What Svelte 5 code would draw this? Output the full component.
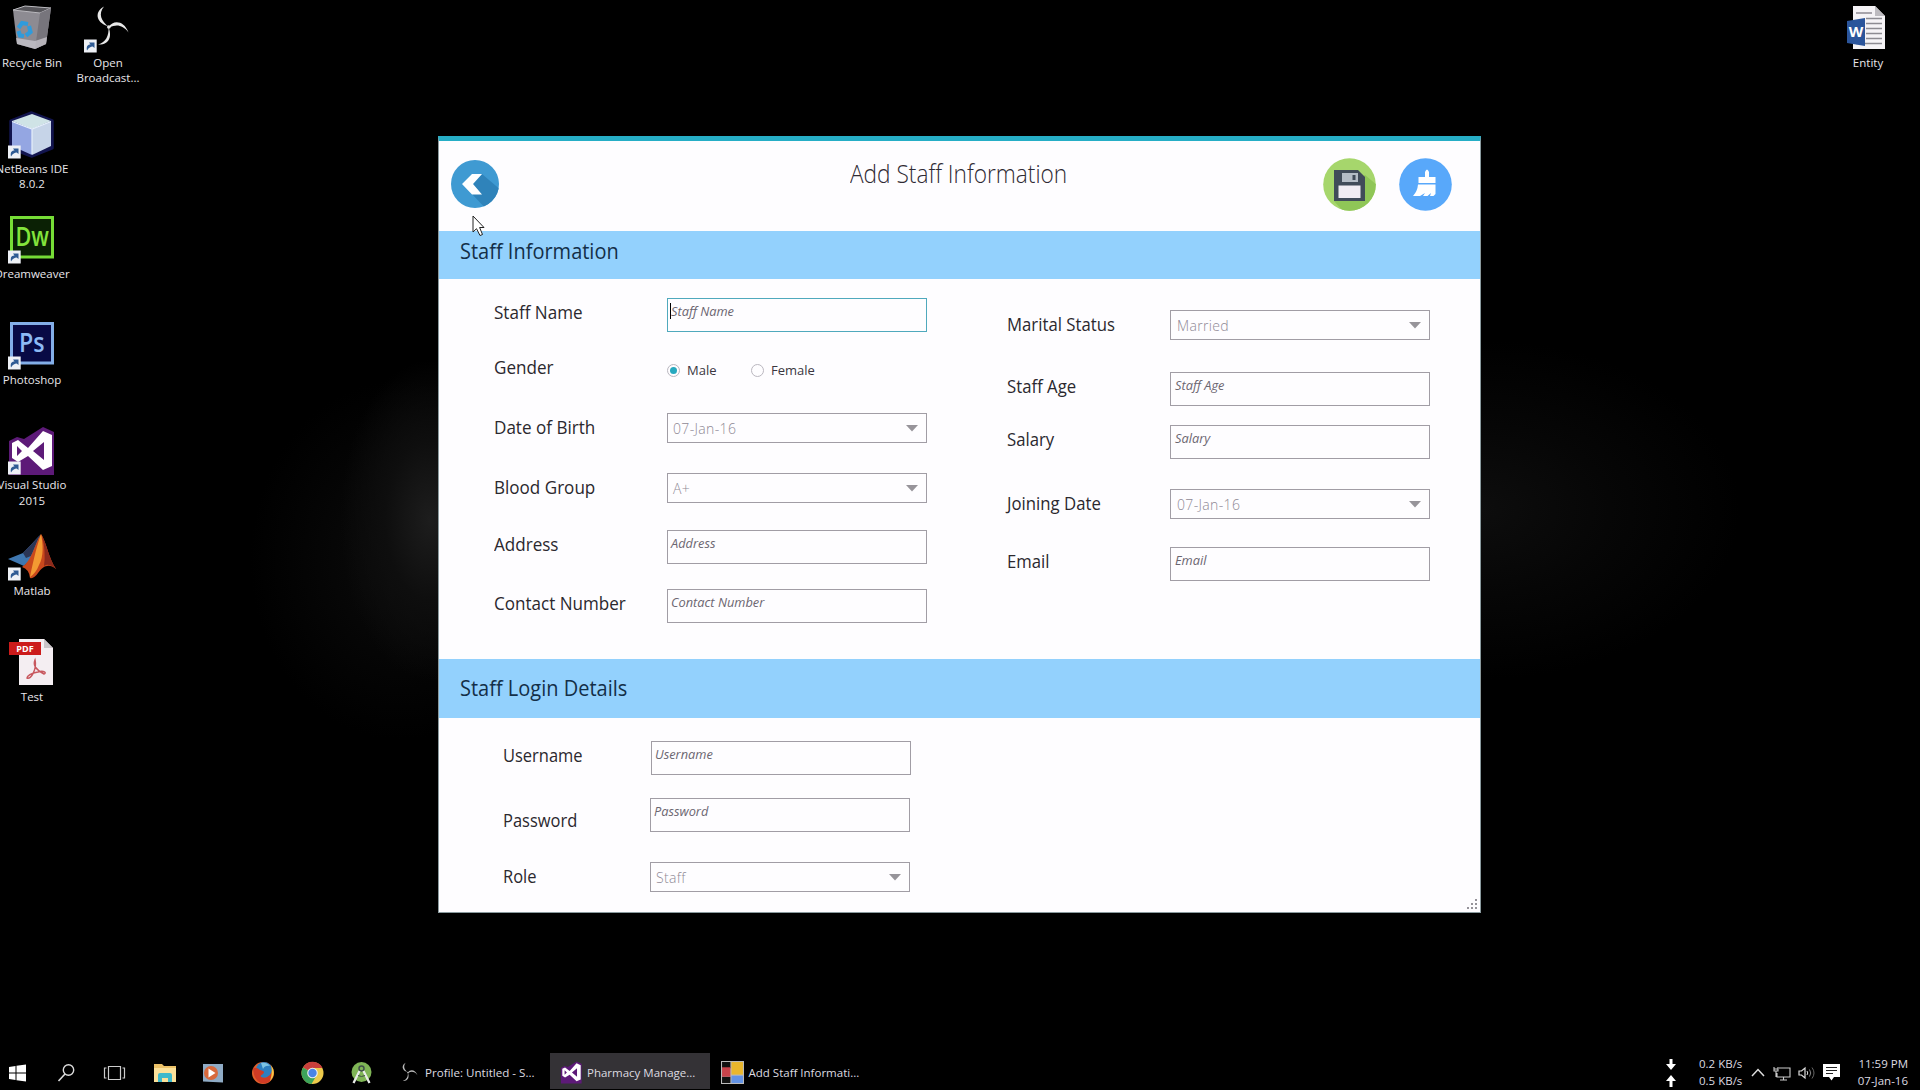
<script>
  const shortcuts = [
    { icon: 'bin', lines: ['Recycle Bin'] },
    { icon: 'netbeans', lines: ['NetBeans IDE', '8.0.2'], link: true },
    { icon: 'dw', lines: ['Dreamweaver'], link: true },
    { icon: 'ps', lines: ['Photoshop'], link: true },
    { icon: 'vs', lines: ['Visual Studio', '2015'], link: true },
    { icon: 'matlab', lines: ['Matlab'], link: true },
    { icon: 'pdf', lines: ['Test'] },
  ];
  const second = [{ icon: 'obs', lines: ['Open', 'Broadcast...'], link: true }];
  const right = [{ icon: 'word', lines: ['Entity'] }];

  const personal = [
    { label: 'Staff Name', kind: 'text', focus: true },
    { label: 'Gender', kind: 'radio' },
    { label: 'Date of Birth', kind: 'select', value: '07-Jan-16' },
    { label: 'Blood Group', kind: 'select', value: 'A+' },
    { label: 'Address', kind: 'text' },
    { label: 'Contact Number', kind: 'text' },
  ];
  const work = [
    { label: 'Marital Status', kind: 'select', value: 'Married' },
    { label: 'Staff Age', kind: 'text' },
    { label: 'Salary', kind: 'text' },
    { label: 'Joining Date', kind: 'select', value: '07-Jan-16' },
    { label: 'Email', kind: 'text' },
  ];
  const login = [
    { label: 'Username', kind: 'text', indent: true },
    { label: 'Password', kind: 'text', low: true },
    { label: 'Role', kind: 'select', value: 'Staff' },
  ];
</script>

{#snippet vsLogo()}
  <path d="M1 14 L9 10 L16 12 L35 0 L46 5 V48 H1Z" fill="#5d1a78" />
  <path fill-rule="evenodd" fill="#fff" d="M4 16 L10 13 L20 21 L35 4 L44 8 V39 L35 43 L20 29 L10 35 L4 31Z M9 19 V29 L14 24Z M36 15 L25 24 L36 33Z" />
{/snippet}

{#snippet obsLogo()}
  <path d="M20 1.500 C11 6 11 17 23.500 21 L25 22 C17 16 14 9 20 1.500Z" />
  <path d="M25 21.500 C29 15 40 15 44.500 27.500 C39 20 32 19 26 22.500Z" />
  <path d="M24.500 22 C28 31 26 40 14 39.500 C22 37 25 31 24.500 22Z" />
  <circle cx="24.800" cy="22" r="1.800" />
{/snippet}

{#snippet shortcut(item)}
  <div class="shortcut">
    <svg class="glyph" viewBox="0 0 48 50">
      {#if item.icon === 'bin'}
        <path d="M5 5 L17 1 L43 3 L38 39 L27 44 L9 39Z" fill="#8d8b92" />
        <path d="M5 5 L17 1 L43 3 L32 8Z" fill="#56555a" stroke="#b9b8bd" />
        <path d="M32 8 L43 3 L38 39 L27 44Z" fill="#77757c" />
        <path d="M8 33 L27 36 L39 32 L38 39 L27 44 L9 39Z" fill="#c9c7cd" opacity=".75" />
        <g fill="none" stroke="#2f9bdc" stroke-width="4.200"><path d="M10.500 23 L14 18 L20 19" /><path d="M21 21 L22.500 27 L18 30.500" /><path d="M16 31 L12 30.500 L10.500 26" /></g>
      {:else if item.icon === 'netbeans'}
        <path d="M3 10 L23 2 L44 10 V37 L24 45 L3 37Z" fill="#12144e" stroke="#12144e" stroke-width="3.500" stroke-linejoin="round" />
        <path d="M4 10 L24 3 L43 10 L24 18Z" fill="#cfe3e6" />
        <path d="M4 10 L24 18 V44 L4 35Z" fill="#94a6e2" />
        <path d="M43 10 L24 18 V44 L43 35Z" fill="#c6d4e8" />
        <path d="M4 10.500 L24 18 L43 10.500 M24 18 V43" fill="none" stroke="#e6effb" stroke-width="1.200" />
      {:else if item.icon === 'dw'}
        <rect x="3.500" y="1.500" width="41" height="39.500" fill="#0b2105" stroke="#76dd36" stroke-width="3" />
        <text x="7.500" y="30" class="adobe" fill="#83e43c" textLength="33.500" lengthAdjust="spacingAndGlyphs">Dw</text>
      {:else if item.icon === 'ps'}
        <rect x="3.500" y="1.500" width="41" height="39.500" fill="#080a45" stroke="#83aee8" stroke-width="3" />
        <text x="11" y="30" class="adobe" fill="#8dbaf5" textLength="25.500" lengthAdjust="spacingAndGlyphs">Ps</text>
      {:else if item.icon === 'vs'}
        {@render vsLogo()}
      {:else if item.icon === 'matlab'}
        <path d="M0 26 L15 20 Q23 12 32 2 L25 24 L16 33Z" fill="#3f77b0" />
        <path d="M15 20 Q23 12 32 2 L23 23 L18 25Z" fill="#2b3656" />
        <path d="M33 1 C38 8 41 26 48 36 C41 30 35 33 30 40 Q26 46 22 45 Q21 36 14 34 C24 28 26 12 33 1Z" fill="#c9481c" />
        <path d="M33 1 C35 10 36 24 31 32 Q28 40 22 44 C24 34 28 15 33 1Z" fill="#f39a32" />
        <path d="M34 3 C39 12 41 26 48 36 C42 31 39 31 36 33 Q38 18 34 3Z" fill="#8c2a1c" />
      {:else if item.icon === 'pdf'}
        <path d="M11 0 H36 L45 9 V46 H11Z" fill="#f4eef2" />
        <path d="M36 0 L45 9 H36Z" fill="#c9c4c8" />
        <rect x="1" y="3" width="32" height="13" fill="#cc1b1b" />
        <text x="17" y="13" class="pdf">PDF</text>
        <path d="M27 21 C25 26 28 31 36 35 C39 34 36 31 30 33 C23 34 19 37 19 39 C23 41 29 30 27 21Z" fill="none" stroke="#c8585f" stroke-width="1.500" />
      {:else if item.icon === 'obs'}
        <g fill="#e8e8e8">{@render obsLogo()}</g>
      {:else if item.icon === 'word'}
        <path d="M9 1 H31 L41 11 V44 H9Z" fill="#f5f3f6" />
        <path d="M31 1 L41 11 H31Z" fill="#bdbbc0" />
        <path d="M12 8 H28 M22 13.500 H38 M22 18.500 H38 M22 23.500 H38 M22 28.500 H38 M22 33.500 H38 M12 38.500 H38" stroke="#8d8b92" stroke-width="1.500" />
        <path d="M3 16 L21 13 V41 L3 38Z" fill="#2b559b" />
        <text x="12" y="32" class="word">W</text>
      {/if}
      {#if item.link}
        <path d="M0 34.500 H12.700 V47.500 H0Z" fill="#eef1f6" />
        <path d="M3 45.500 C2 41 4 39.500 6.500 39.500 L5 37.500 H10.500 V43 L8.700 41.500 C6.500 41.500 5 42.500 3 45.500Z" fill="#2f5b94" />
      {/if}
    </svg>
    {#each item.lines as line}<span>{line}</span>{/each}
  </div>
{/snippet}

{#snippet field(f)}
  <div class="label" class:low={f.low}>{f.label}</div>
  {#if f.kind === 'text'}
    <div class="input" class:focus={f.focus} class:indent={f.indent}><em>{f.label}</em></div>
  {:else if f.kind === 'select'}
    <div class="select">
      <span>{f.value}</span>
      <svg width="12" height="7" viewBox="0 0 12 7"><path d="M0 0 H12 L6 6.500Z" fill="#97949a" /></svg>
    </div>
  {:else}
    <div class="radios">
      <i class="dot on"></i><span class="male">Male</span><i class="dot"></i><span>Female</span>
    </div>
  {/if}
{/snippet}

<div class="desktop">
  <div class="icons">
    <div class="col">{#each shortcuts as s}{@render shortcut(s)}{/each}</div>
    <div class="col">{#each second as s}{@render shortcut(s)}{/each}</div>
    <div class="col last">{#each right as s}{@render shortcut(s)}{/each}</div>
  </div>

  <div class="window">
    <header>
      <svg class="back" viewBox="0 0 48 48">
        <defs><clipPath id="disc"><circle cx="24" cy="24" r="24" /></clipPath></defs>
        <circle cx="24" cy="24" r="24" fill="#3f9ad2" />
        <path clip-path="url(#disc)" d="M31 14 L52 32 V52 H38 L20 33 L30 34 L22 24Z" fill="#2f83ba" />
        <path d="M21 14 H31 L22 24 L31 34.500 H21 L11 24Z" fill="#fff" />
      </svg>
      <h1>Add Staff Information</h1>
      <svg class="act" viewBox="0 0 53 53">
        <defs><clipPath id="disc2"><circle cx="26.500" cy="26.500" r="26.300" /></clipPath></defs>
        <circle cx="26.500" cy="26.500" r="26.300" fill="#a6d66c" />
        <path clip-path="url(#disc2)" d="M42 17 L60 32 V60 H26 L11 43Z" fill="#8fc657" />
        <path d="M11 12 H35 L42 19 V43 H11Z" fill="#404b59" />
        <rect x="19" y="15" width="16" height="9" fill="#b4bcc6" /><rect x="29.500" y="17" width="3" height="5" fill="#404b59" />
        <rect x="15.500" y="27.500" width="22" height="12.500" fill="#f0ecf3" />
      </svg>
      <svg class="act" viewBox="0 0 53 53">
        <circle cx="26.500" cy="26.500" r="26.300" fill="#58a8fa" />
        <path d="M26 14 Q28 9 30 14 V19 H36.500 V25 H19.500 V19 H26Z" fill="#fff" />
        <path d="M19 26.500 H36.500 V36 L34.500 38 L31 38 L32 35 L28.500 38 H24 L26 35 L21 38 H14 Q18.500 33 19 26.500Z" fill="#fff" />
      </svg>
    </header>
    <h2><span>Staff Information</span></h2>
    <section class="info">
      <div class="form personal">{#each personal as f}{@render field(f)}{/each}</div>
      <div class="form work">{#each work as f}{@render field(f)}{/each}</div>
    </section>
    <h2 class="tall"><span>Staff Login Details</span></h2>
    <section class="login">
      <div class="form creds">{#each login as f}{@render field(f)}{/each}</div>
      <svg class="grip" width="12" height="12" viewBox="0 0 12 12"><path d="M9 1h2v2h-2z M9 5h2v2h-2z M9 9h2v2h-2z M5 5h2v2h-2z M5 9h2v2h-2z M1 9h2v2h-2z" fill="#96939a" /></svg>
    </section>
  </div>

  <svg class="cursor" width="14" height="22" viewBox="0 0 14 22"><path d="M1 1 V17 L4.500 13.700 L8 20.500 L10.500 19.500 L7.600 12.500 H12Z" fill="#fff" stroke="#222" stroke-width="1" /></svg>

  <footer>
    <div class="pins">
      <svg viewBox="0 0 24 24"><path d="M4 6 L10.500 5 V11.500 H4Z M11.500 4.800 L21 3.500 V11.500 H11.500Z M4 12.500 H10.500 V19 L4 18Z M11.500 12.500 H21 V20.500 L11.500 19.200Z" fill="#fff" /></svg>
      <svg viewBox="0 0 24 24"><circle cx="14.500" cy="9" r="5.200" fill="none" stroke="#ddd" stroke-width="1.400" /><path d="M11 13 L4.500 20" stroke="#ddd" stroke-width="1.600" /></svg>
      <svg viewBox="0 0 24 24"><path d="M5.500 5.500 H17.500 V18.500 H5.500Z M3.500 7 H1.500 V17 H3.500 M19.500 7 H21.500 V17 H19.500" fill="none" stroke="#ccc" stroke-width="1.200" /></svg>
      <svg viewBox="0 0 24 24"><path d="M1 3 H9 L11 5 H23 V21 H1Z" fill="#ecc268" /><path d="M1 7 H23 V21 H1Z" fill="#fbe19a" /><path d="M5 21 V14 Q5 12 7 12 H17 Q19 12 19 14 V21 H15 V17 H9 V21Z" fill="#3db9cc" /></svg>
      <svg viewBox="0 0 24 24"><path d="M1 3 H21 V21.500 L1 20.500Z" fill="#8fabc5" /><circle cx="9" cy="12" r="7" fill="#d8693c" /><path d="M6.500 7.500 L13.500 12 L6.500 16.500Z" fill="#fff" /></svg>
      <svg viewBox="0 0 24 24"><circle cx="12" cy="12" r="11" fill="#e2602b" /><circle cx="13" cy="9" r="8" fill="#2d7fc0" /><path d="M10 2 Q16 1 19 5 Q14 4 12 8Z" fill="#7cc4e4" /><path d="M2 7 Q6 6 9 9 Q15 10 12 13 Q9 14 10 16 Q16 19 21 11 Q23 20 14 22.500 Q3 23 2 7Z" fill="#cf3b25" /><path d="M20 4 Q26 12 19 20 Q22 11 20 4Z" fill="#f6c843" /></svg>
      <svg viewBox="0 0 24 24"><circle cx="12.500" cy="12" r="11" fill="#edc94a" /><path d="M12.500 12 L3 6.500 A11 11 0 0 1 22.500 7 H12.500Z" fill="#c93f3c" /><path d="M3 6.500 A11 11 0 0 0 11.500 23 L16.500 14.500 L12.500 12Z" fill="#3da45a" /><circle cx="12.500" cy="12" r="5.300" fill="#eee" /><circle cx="12.500" cy="12" r="4.200" fill="#4a83e4" /></svg>
      <svg viewBox="0 0 24 24"><circle cx="12.500" cy="11" r="10" fill="#7fb556" /><circle cx="12.500" cy="7.500" r="2.500" fill="none" stroke="#41504a" stroke-width="1.500" /><path d="M10.500 10 L4.500 22 M14.500 10 L20.500 22" stroke="#e8ece8" stroke-width="2.300" /><path d="M9 14.500 Q12.500 16.500 16 14.500" fill="none" stroke="#41504a" stroke-width="1" /></svg>
    </div>
    <div class="task obs"><svg viewBox="8 -2 44 48" fill="#bbb">{@render obsLogo()}</svg><span>Profile: Untitled - S...</span></div>
    <div class="task active"><svg viewBox="0 -1 48 50">{@render vsLogo()}</svg><span>Pharmacy Manage...</span></div>
    <div class="task"><svg viewBox="0 0 22 22"><rect width="22" height="22" fill="#bbb" /><path d="M1 1h8v6h-8z M1 15h8v6h-8z" fill="#111" /><rect x="1" y="6" width="8" height="9" fill="#c9434b" /><rect x="10" y="1" width="11" height="12" fill="#e9b62c" /><rect x="10" y="14" width="11" height="7" fill="#6292e4" /></svg><span>Add Staff Informati...</span></div>
    <div class="tray">
      <svg class="arrows" width="12" height="30" viewBox="0 0 12 30"><path d="M4.500 1 H7.500 V6 H11 L6 12 L1 6 H4.500Z M4.500 29 H7.500 V23 H11 L6 17 L1 23 H4.500Z" fill="#fff" /></svg>
      <div class="two speed"><span>0.2 KB/s</span><span>0.5 KB/s</span></div>
      <svg class="chev" width="14" height="9" viewBox="0 0 14 9"><path d="M1 8 L7 1.500 L13 8" fill="none" stroke="#ddd" stroke-width="1.500" /></svg>
      <svg class="net" width="18" height="16" viewBox="0 0 18 16"><path d="M6 3 H17 V12 H4 V8 M10.500 12 V15 M7 15 H14 M1 2 V6 H5 V2 M1 4 H5 M3 6 V12" fill="none" stroke="#ccc" stroke-width="1.100" /></svg>
      <svg class="vol" width="18" height="14" viewBox="0 0 18 14"><path d="M1 5 H3.500 L7 2 V12 L3.500 9 H1Z" fill="none" stroke="#ddd" stroke-width="1.200" /><path d="M9 5 Q10.500 7 9 9" fill="none" stroke="#ddd" /><path d="M11.500 3.500 Q14 7 11.500 10.500" fill="none" stroke="#888" /><path d="M14 1.500 Q18 7 14 12.500" fill="none" stroke="#666" /></svg>
      <svg class="note" width="17" height="17" viewBox="0 0 17 17"><path d="M0 0 H17 V13 H11 L8.500 16.500 L6 13 H0Z" fill="#fff" /><path d="M3 3.500 H14 M3 6.500 H14 M3 9.500 H10" stroke="#222" stroke-width="1.200" /></svg>
      <div class="two clock"><span>11:59 PM</span><span>07-Jan-16</span></div>
    </div>
  </footer>
</div>

<style>
  :global(body) { background: #000; overflow: hidden; }
  .desktop {
    position: relative;
    box-sizing: border-box;
    width: 1920px;
    height: 1090px;
    overflow: hidden;
    display: flex;
    flex-direction: column;
    font-family: 'Open Sans', 'Noto Sans', sans-serif;
    background:
      radial-gradient(ellipse 90px 160px at 430px 520px, #1d1d1d 0, #0e0e0e 50%, transparent 100%),
      radial-gradient(ellipse 150px 180px at 400px 560px, #0b0b0b 0, transparent 100%),
      radial-gradient(ellipse 260px 170px at 1480px 510px, #0d0d0d 0, #060606 50%, transparent 100%),
      #000;
  }
  .icons { flex: 1; display: flex; margin-left: -6px; min-height: 0; }
  .col { width: 76px; }
  .col.last { margin-left: auto; margin-right: 14px; }
  .shortcut {
    height: 105.6px;
    display: flex;
    flex-direction: column;
    align-items: center;
    color: #e8e6ea;
    font-size: 11.5px;
    line-height: 15.4px;
    white-space: nowrap;
  }
  .glyph { width: 48px; height: 50px; margin: 5px 0 0; flex: none; display: block; }
  .adobe { font: 600 27px 'Open Sans', sans-serif; }
  .pdf { font: 700 9px 'Open Sans', sans-serif; text-anchor: middle; fill: #fff; }
  .word { font: 700 15px 'Open Sans', sans-serif; text-anchor: middle; fill: #fff; }

  .window {
    position: absolute;
    left: 438px;
    top: 136px;
    box-sizing: border-box;
    width: 1043px;
    height: 777px;
    background: #fefdff;
    border: 1px solid #8a9a9e;
    border-top: 5px solid #26aec6;
    display: flex;
    flex-direction: column;
  }
  header { height: 90px; flex: none; display: flex; align-items: flex-start; padding-left: 12px; }
  .back { width: 48px; height: 48px; margin-top: 19px; }
  h1 {
    margin: 15.5px 0 0 351px;
    width: 472.5px;
    font-weight: 300;
    font-size: 25px;
    line-height: 32px;
    color: #2f2a33;
    white-space: nowrap;
    transform: scaleX(.906);
    transform-origin: left;
  }
  .act { width: 53px; height: 53px; margin: 17px 23.5px 0 0; flex: none; }
  h2 {
    margin: 0;
    height: 48px;
    flex: none;
    box-sizing: border-box;
    padding: 5px 0 0 21px;
    background: #93d1fd;
    font-weight: 400;
    font-size: 21.5px;
    line-height: 30px;
    color: #132f48;
  }
  h2 span { display: inline-block; transform: scaleX(.93); transform-origin: left; }
  h2.tall { height: 59px; padding-top: 14px; }
  section { display: flex; justify-content: flex-start; }
  .info { height: 380px; flex: none; }
  .form { display: grid; align-items: start; align-content: start; }
  .personal { margin: 19px 0 0 55px; grid-template-columns: 173px 260px; grid-template-rows: 54.5px 60.5px 60px 57px 59px 34px; }
  .work { margin: 31px 0 0 80px; grid-template-columns: 163px 260px; grid-template-rows: 62px 53px 64px 58px 34px; }
  .creds { margin: 23px 0 0 64px; grid-template-columns: 147px 260px; grid-template-rows: 57px 64px 30px; }
  .label {
    font-size: 18px;
    line-height: 28px;
    color: #2b282e;
    white-space: nowrap;
    transform: scaleX(.948);
    transform-origin: left;
  }
  .work .label { transform: scaleX(.93); }
  .creds .label { transform: scaleX(.915); }
  .label.low { padding-top: 8px; }
  .input, .select { box-sizing: border-box; width: 260px; border: 1px solid #a19da5; background: #fefdff; }
  .input { height: 34px; padding-left: 3px; }
  .input.indent { margin-left: 1px; }
  .input em { font-size: 12.8px; line-height: 24px; display: block; color: #6c6671; }
  .work .input { padding-left: 4px; }
  .input.focus { border-color: #4fa9bd; padding-left: 2px; }
  .input.focus em::before { content: ''; display: inline-block; width: 1px; height: 16px; background: #000; vertical-align: -3px; }
  .select { height: 30px; display: flex; align-items: center; justify-content: space-between; padding: 0 8px 0 5px; }
  .select span { font-size: 14px; font-weight: 300; line-height: 28px; padding-top: 1px; letter-spacing: .35px; color: #8f8995; }
  .work .select { padding-left: 6px; }
  .radios { display: flex; align-items: center; height: 35px; font-size: 13px; color: #3b373f; }
  .dot { box-sizing: border-box; width: 13px; height: 13px; border: 1px solid #bab7bf; border-radius: 50%; margin-right: 7px; display: grid; place-items: center; }
  .dot.on::before { content: ''; width: 7px; height: 7px; border-radius: 50%; background: #27a9bf; }
  .male { width: 64px; }
  .login { flex: 1; justify-content: space-between; align-items: flex-start; }
  .grip { align-self: flex-end; margin: 0 2px 2px 0; }
  .cursor { position: absolute; left: 472px; top: 215px; }

  footer { height: 36px; flex: none; margin-bottom: 1px; display: flex; color: #dddbe0; font-size: 11.5px; white-space: nowrap; }
  .pins { display: flex; align-items: center; gap: 25.2px; padding: 3px 0 0 5px; width: 389px; box-sizing: border-box; }
  .pins svg { width: 24px; height: 24px; flex: none; }
  .task { width: 160.5px; box-sizing: border-box; display: flex; align-items: center; padding: 3px 0 0 10px; gap: 4.5px; }
  .task.obs { gap: 3px; font-size: 11.6px; }
  .task svg { width: 23px; height: 23px; flex: none; }
  .task.active { background: #343236; }
  .task:not(.obs):not(.active) { padding-left: 11px; }
  .tray { margin-left: auto; display: flex; align-items: center; padding: 3px 12px 0 0; }
  .two { display: flex; flex-direction: column; line-height: 16.5px; }
  .speed { margin-left: 22px; width: 43px; }
  .clock { align-items: flex-end; width: 52px; margin-left: 16px; }
  .chev { margin-left: 9px; }
  .net { margin-left: 8px; }
  .vol { margin-left: 7px; }
  .note { margin-left: 7px; }
</style>
